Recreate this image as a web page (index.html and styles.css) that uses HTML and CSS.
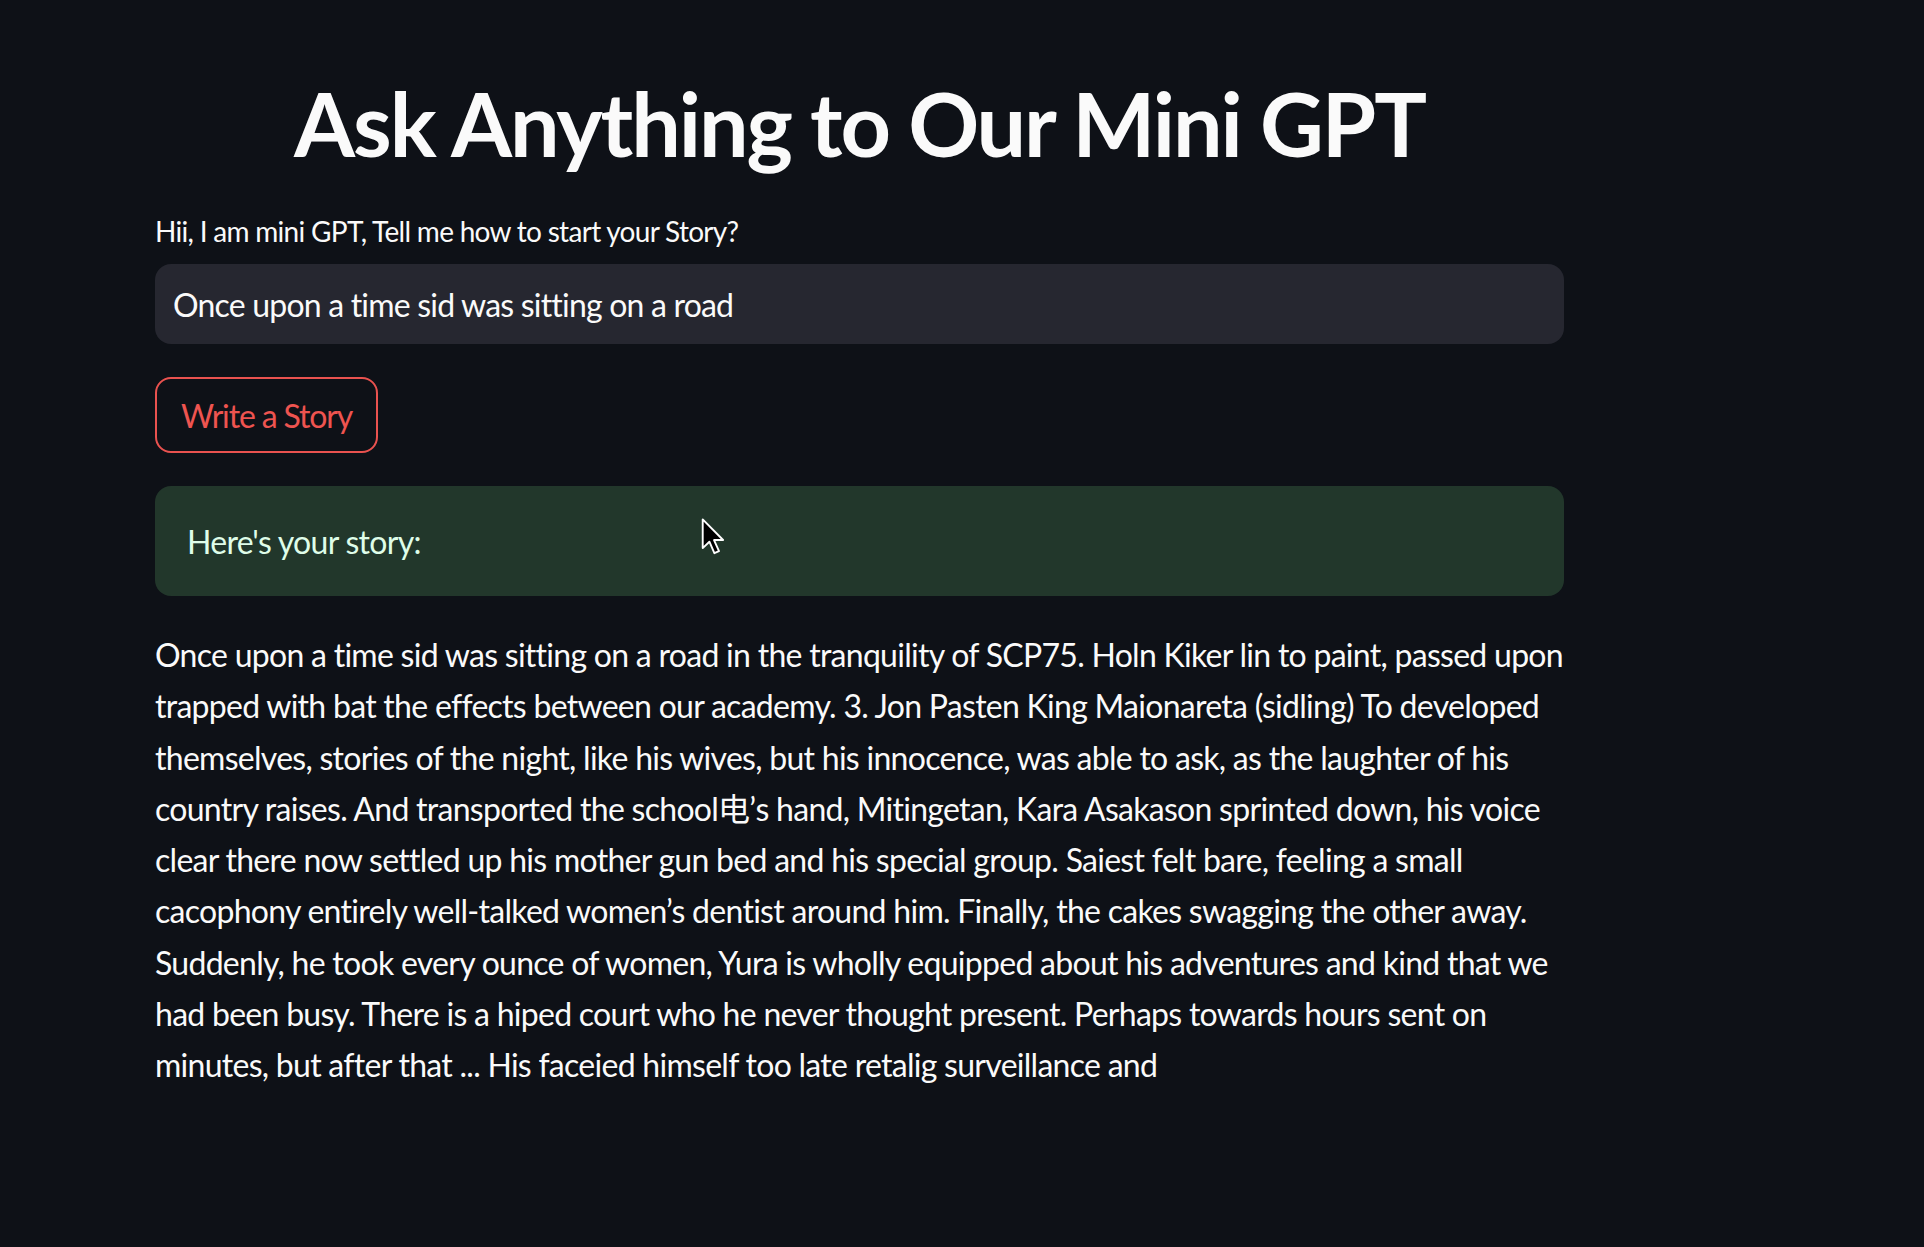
FILE: index.html
```html
<!DOCTYPE html>
<html lang="en">
<head>
<meta charset="utf-8">
<title>Mini GPT</title>
<link rel="stylesheet" href="styles.css">
</head>
<body>
<main class="app">
  <h1 class="title">Ask Anything to Our Mini GPT</h1>
  <div class="field">
    <label class="label">Hii, I am mini GPT, Tell me how to start your Story?</label>
    <div class="input">Once upon a time sid was sitting on a road</div>
  </div>
  <div class="actions"><button class="btn">Write a Story</button></div>
  <div class="alert">Here's your story:</div>
  <p class="story">Once upon a time sid was sitting on a road in the tranquility of SCP75. Holn Kiker lin to paint, passed upon<br>trapped with bat the effects between our academy. 3. Jon Pasten King Maionareta (sidling) To developed<br>themselves, stories of the night, like his wives, but his innocence, was able to ask, as the laughter of his<br>country raises. And transported the school电’s hand, Mitingetan, Kara Asakason sprinted down, his voice<br>clear there now settled up his mother gun bed and his special group. Saiest felt bare, feeling a small<br>cacophony entirely well-talked women’s dentist around him. Finally, the cakes swagging the other away.<br>Suddenly, he took every ounce of women, Yura is wholly equipped about his adventures and kind that we<br>had been busy. There is a hiped court who he never thought present. Perhaps towards hours sent on<br>minutes, but after that ... His faceied himself too late retalig surveillance and</p>
</main>
<svg class="cursor" width="24" height="37" viewBox="0 0 14 21.5" aria-hidden="true">
  <path d="M1 0.8 L1 17.5 L4.9 13.8 L7.8 20.5 L10.5 19.3 L7.6 12.8 L12.9 12.8 Z" fill="#000" stroke="#fff" stroke-width="1.1" stroke-linejoin="round"/>
</svg>
</body>
</html>
```
FILE: styles.css
```css
html, body {
  margin: 0;
  padding: 0;
  background: #0e1117;
}

body {
  font-family: "Lato", "Noto Sans CJK SC", sans-serif;
  color: #fafafa;
  min-height: 1247px;
  position: relative;
}

.app {
  width: 1409px;
  padding: 70px 0 0 155px;
  display: flex;
  flex-direction: column;
  gap: 33px;
}

.title {
  margin: 0;
  font-size: 88px;
  line-height: 106px;
  font-weight: 700;
  text-align: center;
  letter-spacing: -2.1px;
  color: #fafafa;
}

.field {
  display: flex;
  flex-direction: column;
  gap: 10px;
}

.label {
  font-size: 28px;
  line-height: 45px;
  letter-spacing: -0.7px;
  color: #fafafa;
}

.input {
  height: 80px;
  box-sizing: border-box;
  background: #262730;
  border-radius: 16px;
  padding: 0 18px;
  display: flex;
  align-items: center;
  font-size: 32px;
  letter-spacing: -0.8px;
  color: #fafafa;
}

.actions {
  display: flex;
}

.btn {
  height: 76px;
  box-sizing: border-box;
  padding: 0 24px;
  background: #0e1117;
  border: 2px solid #e9524f;
  border-radius: 16px;
  color: #ee5450;
  font-family: inherit;
  font-size: 32px;
  letter-spacing: -1.15px;
}

.alert {
  height: 110px;
  box-sizing: border-box;
  padding: 0 32px;
  display: flex;
  align-items: center;
  background: #22372b;
  border-radius: 16px;
  color: #dffde9;
  font-size: 32px;
  letter-spacing: -0.7px;
}

.story {
  margin: 0;
  font-size: 32px;
  line-height: 51.3px;
  letter-spacing: -0.72px;
  white-space: nowrap;
  color: #fafafa;
}

.cursor {
  position: absolute;
  left: 701px;
  top: 518px;
}
```
